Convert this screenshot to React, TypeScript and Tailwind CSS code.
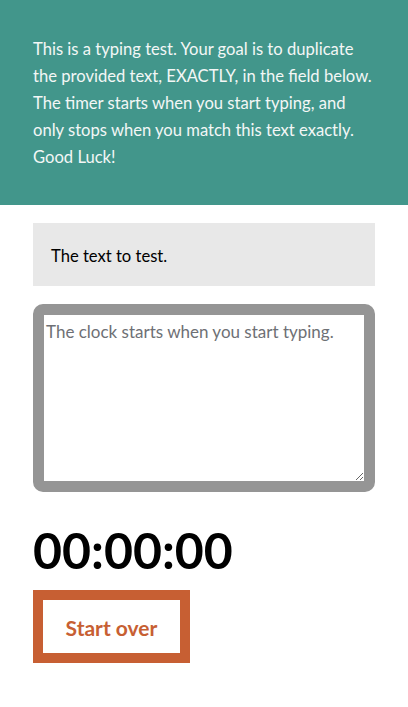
export default function App() {
  return (
    <div className="min-h-screen bg-white" style={{ fontFamily: "Lato, 'Noto Sans', sans-serif" }}>
      <header className="bg-[#42968b] px-[33px] pt-[36px] pb-[34px]">
        <p className="text-[16.6px] leading-[27px] text-[#f3f7f6]">
          This is a typing test. Your goal is to duplicate the provided text, EXACTLY, in the field
          below. The timer starts when you start typing, and only stops when you match this text
          exactly. Good Luck!
        </p>
      </header>

      <main className="px-[33px] pt-[18px]">
        <div className="bg-[#e8e8e8] h-[63px] px-[18px] pt-[3px] flex items-center text-[16.6px] text-black">
          The text to test.
        </div>

        <textarea
          className="mt-[18px] block w-full h-[188px] border-[11px] border-[#959595] rounded-[10px] bg-white px-[2px] pt-[6px] pb-[4px] text-[17px] leading-[22px] text-black placeholder:text-[#6e7075] outline-none"
          placeholder="The clock starts when you start typing."
        />

        <div className="mt-[28px] text-[50px] leading-[60px] font-bold text-black">00:00:00</div>

        <button className="mt-[10px] w-[157px] h-[73px] border-[10px] border-[#c75f33] bg-white pt-[2px] text-[#c75f33] text-[21px] font-bold">
          Start over
        </button>
      </main>
    </div>
  );
}
